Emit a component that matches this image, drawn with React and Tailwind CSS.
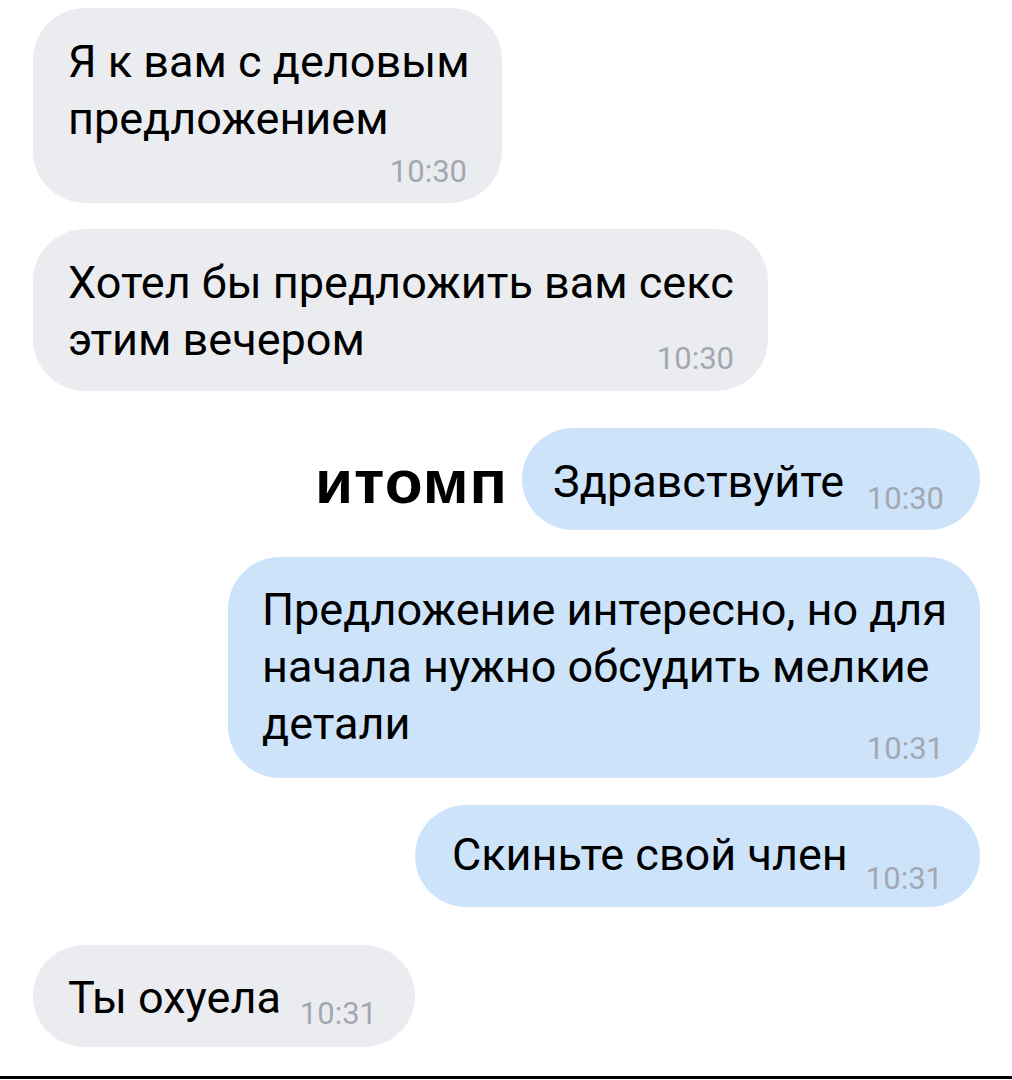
// Chat screenshot: two-sided message bubbles with timestamps

const GREY = "bg-[#ebecf0]";
const BLUE = "bg-[#cce3fa]";

function Time({ children, className = "" }) {
  return (
    <span
      className={`text-[31px] leading-[30px] text-[#a3a8b0] whitespace-nowrap ${className}`}
    >
      {children}
    </span>
  );
}

export default function App() {
  return (
    <div className="w-[1012px] h-[1080px] bg-white flex flex-col font-['Roboto','Noto_Sans',sans-serif] text-black overflow-hidden">
      {/* incoming: two lines, time on its own row */}
      <div
        className={`ml-[33px] mt-[8px] self-start rounded-[52px] ${GREY} w-[469px] h-[195px] px-[35px] pt-[25px] flex flex-col`}
      >
        <p className="text-[45px] leading-[57px] whitespace-nowrap">
          Я к вам с деловым
          <br />
          предложением
        </p>
        <Time className="self-end mt-[10px]">10:30</Time>
      </div>

      {/* incoming: two lines, time beside last line */}
      <div
        className={`ml-[33px] mt-[26px] self-start rounded-[52px] ${GREY} w-[735px] h-[162px] pl-[35px] pr-[34px] pt-[25px] flex flex-col`}
      >
        <p className="text-[45px] leading-[57px] whitespace-nowrap">
          Хотел бы предложить вам секс
        </p>
        <div className="flex justify-between items-end">
          <p className="text-[45px] leading-[57px] whitespace-nowrap">
            этим вечером
          </p>
          <Time className="mb-[-6px]">10:30</Time>
        </div>
      </div>

      {/* outgoing with caption to the left */}
      <div className="mt-[37px] self-end mr-[32px] flex items-center">
        <span className="font-['Liberation_Sans',sans-serif] font-bold text-[62px] leading-none tracking-[1px] mr-[14px] mt-[6px]">
          итомп
        </span>
        <div
          className={`rounded-[52px] ${BLUE} w-[458px] h-[102px] pl-[31px] pr-[36px] flex items-start justify-between`}
        >
          <span className="text-[45px] leading-[57px] whitespace-nowrap mt-[25px]">
            Здравствуйте
          </span>
          <Time className="mt-[56px]">10:30</Time>
        </div>
      </div>

      {/* outgoing: three lines */}
      <div
        className={`mt-[27px] self-end mr-[32px] rounded-[52px] ${BLUE} w-[752px] h-[221px] pl-[34px] pr-[36px] pt-[24px] flex flex-col`}
      >
        <p className="text-[45px] leading-[57px] whitespace-nowrap">
          Предложение интересно, но для
          <br />
          начала нужно обсудить мелкие
        </p>
        <div className="flex justify-between items-end">
          <p className="text-[45px] leading-[57px] whitespace-nowrap">
            детали
          </p>
          <Time className="mb-[-12px]">10:31</Time>
        </div>
      </div>

      {/* outgoing: single line */}
      <div
        className={`mt-[27px] self-end mr-[32px] rounded-[52px] ${BLUE} w-[565px] h-[102px] pl-[37px] pr-[37px] flex items-start justify-between`}
      >
        <span className="text-[45px] leading-[57px] whitespace-nowrap mt-[21px]">
          Скиньте свой член
        </span>
        <Time className="mt-[59px]">10:31</Time>
      </div>

      {/* incoming: single line */}
      <div
        className={`ml-[33px] mt-[38px] self-start rounded-[52px] ${GREY} w-[382px] h-[102px] pl-[35px] pr-[38px] flex items-start justify-between`}
      >
        <span className="text-[45px] leading-[57px] whitespace-nowrap mt-[24px]">
          Ты охуела
        </span>
        <Time className="mt-[54px]">10:31</Time>
      </div>

      {/* bottom rule */}
      <div className="mt-auto mb-[1px] h-[3px] bg-black" />
    </div>
  );
}
